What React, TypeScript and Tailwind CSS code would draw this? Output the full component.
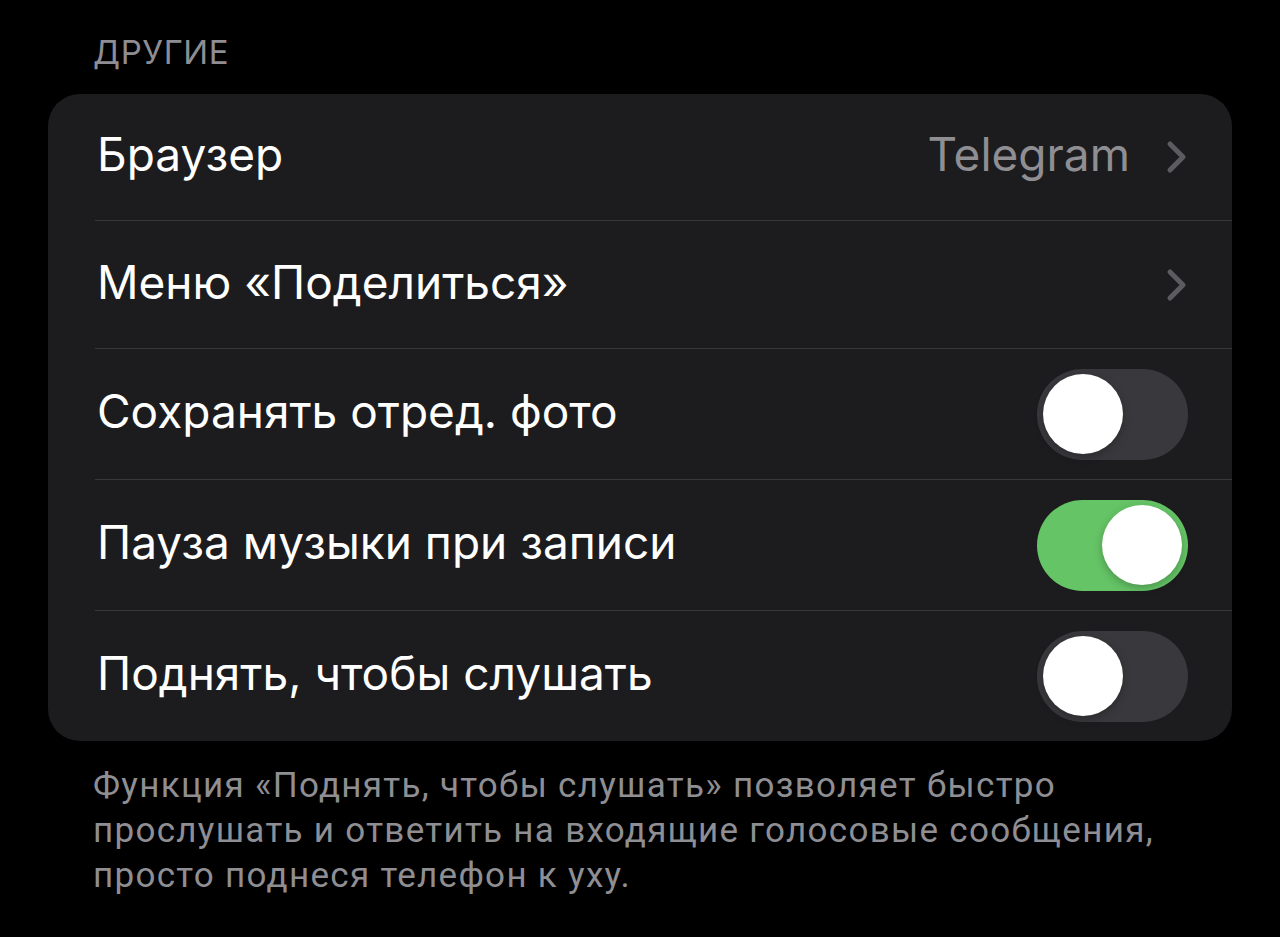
import React from 'react'

type Row = { label: string; value?: string; chevron?: boolean; toggle?: boolean; on?: boolean }

const rows: Row[] = [
  { label: 'Браузер', value: 'Telegram', chevron: true },
  { label: 'Меню «Поделиться»', chevron: true },
  { label: 'Сохранять отред. фото', toggle: true, on: false },
  { label: 'Пауза музыки при записи', toggle: true, on: true },
  { label: 'Поднять, чтобы слушать', toggle: true, on: false },
]

const Chevron = () => (
  <svg width="22" height="34" viewBox="0 0 22 34" fill="none">
    <path d="M4 4 L17 17 L4 30" stroke="#5b5b60" strokeWidth="5" strokeLinecap="round" strokeLinejoin="round" />
  </svg>
)

const Toggle = ({ on }: { on?: boolean }) => (
  <div className={`flex h-[91px] w-[151px] items-center rounded-full px-[6px] ${on ? 'justify-end bg-[#65c466]' : 'justify-start bg-[#39393d]'}`}>
    <div className="h-[80px] w-[80px] rounded-full bg-white shadow-[0_3px_8px_rgba(0,0,0,0.25)]" />
  </div>
)

export default function App() {
  return (
    <div className="min-h-[937px] w-full bg-black pt-[30px] font-['Inter','Liberation_Sans',sans-serif]">
      <div className="pl-[93px] text-[33px] leading-[44px] tracking-[0.6px] text-[#8d8d93]">ДРУГИЕ</div>
      <div className="mx-[48px] mt-[20px] overflow-hidden rounded-[32px] bg-[#1c1c1e] pl-[47px]">
        {rows.map((r, i) => (
          <div
            key={i}
            className={`flex items-center justify-between pr-[44px] ${i === 0 ? 'h-[126px]' : i === 1 ? 'h-[128px]' : 'h-[131px]'} ${i > 0 ? 'border-t border-[#38383a]' : ''}`}
          >
            <span className="pb-[6px] pl-[2px] text-[46px] leading-none text-white">{r.label}</span>
            <div className="flex items-center gap-[36px]">
              {r.value && <span className="pb-[6px] text-[46px] leading-none text-[#8e8e93]">{r.value}</span>}
              {r.chevron && <Chevron />}
              {r.toggle && <Toggle on={r.on} />}
            </div>
          </div>
        ))}
      </div>
      <p className="mt-[22px] pl-[93px] pr-[100px] font-['Roboto','Inter',sans-serif] text-[35px] leading-[45px] tracking-[1.3px] text-[#8e8e93]">
        Функция «Поднять, чтобы слушать» позволяет быстро прослушать и ответить на входящие голосовые сообщения, просто поднеся телефон к уху.
      </p>
    </div>
  )
}
